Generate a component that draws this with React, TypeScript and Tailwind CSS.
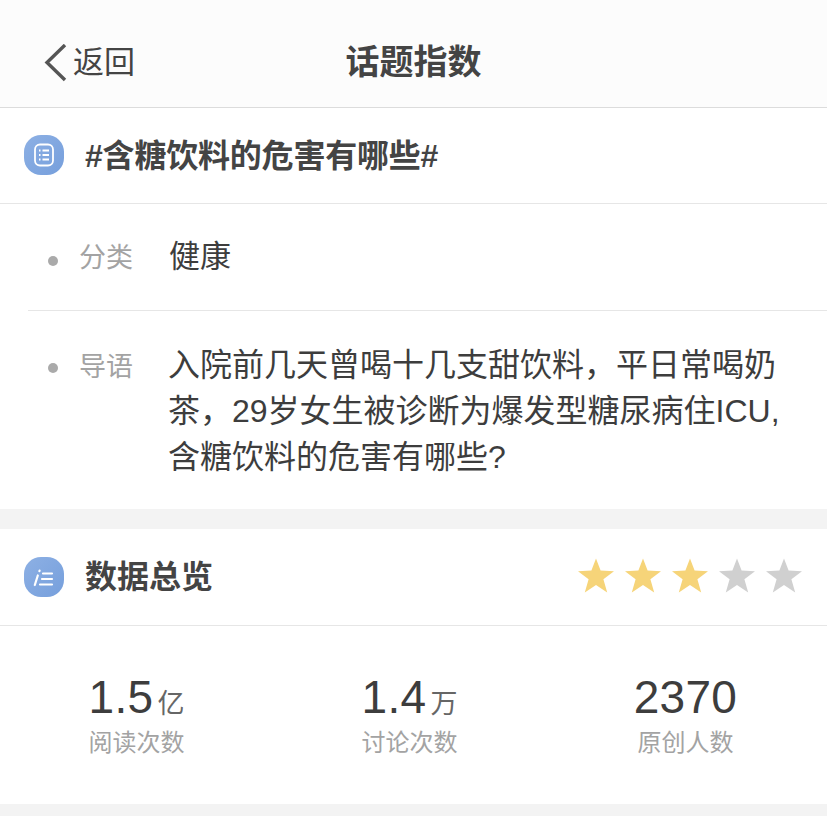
const font = "font-['Liberation_Sans','Noto_Sans_CJK_SC',sans-serif]";

const Star = ({ on }: { on: boolean }) => (
  <svg width="36" height="36" viewBox="0 0 36 36">
    <path
      d="M18 0.5 L22.6 12.6 L36 13.2 L25.4 21.2 L29.2 34.4 L18 27 L6.8 34.4 L10.6 21.2 L0 13.2 L13.4 12.6 Z"
      fill={on ? "#f6d479" : "#d0d0d0"}
    />
  </svg>
);

const IconBox = ({ children }: { children: React.ReactNode }) => (
  <div className="w-10 h-10 rounded-[17px] bg-gradient-to-br from-[#8db0e4] to-[#769fdc] flex items-center justify-center">
    {children}
  </div>
);

const stats = [
  { num: "1.5", unit: "亿", label: "阅读次数" },
  { num: "1.4", unit: "万", label: "讨论次数" },
  { num: "2370", unit: "", label: "原创人数" },
];

const App = () => {
  return (
    <main className={`${font} w-[827px] h-[816px] overflow-hidden bg-white text-[#3d3d3d]`}>
      <header className="h-[108px] bg-[#fcfcfc] border-b border-[#dcdcdc] relative flex items-center justify-center">
        <div className="absolute left-[44px] top-[44px] flex items-center gap-[5px]">
          <svg width="24" height="38" viewBox="0 0 24 38" fill="none">
            <path d="M21 1 L3 18.5 L21 36" stroke="#555555" strokeWidth="3.4" />
          </svg>
          <span className="text-[31px] leading-[38px] text-[#444444]">返回</span>
        </div>
        <h1 className="text-[34px] font-bold leading-none text-[#444444] pt-[16px]">话题指数</h1>
      </header>

      <section className="h-[96px] border-b border-[#e6e6e6] flex items-center pl-6 pb-[2px]">
        <IconBox>
          <svg width="24" height="24" viewBox="0 0 24 24" fill="none" stroke="#ffffff">
            <rect x="3" y="1.5" width="18" height="21" rx="5" strokeWidth="1.8" />
            <path d="M7 7.5h1.5M10.5 7.5h6.5M7 12h1.5M10.5 12h6.5M7 16.5h1.5M10.5 16.5h6.5" strokeWidth="1.8" />
          </svg>
        </IconBox>
        <h2 className="ml-[21px] text-[32px] tracking-[-0.2px] font-bold leading-none text-[#444444] pt-[2px]">#含糖饮料的危害有哪些#</h2>
      </section>

      <section className="h-[107px] pl-7">
        <div className="h-full border-b border-[#e6e6e6] flex items-start pl-5">
          <span className="mt-[52px] block w-[10px] h-[10px] rounded-full bg-[#aaaaaa]" />
          <span className="mt-[41px] ml-[21px] w-[90px] text-[27px] leading-none text-[#a3a3a3]">分类</span>
          <span className="mt-[37px] text-[31px] leading-none">健康</span>
        </div>
      </section>

      <section className="h-[198px] flex items-start pl-12 pt-[31px]">
        <span className="mt-[21px] block w-[10px] h-[10px] rounded-full bg-[#aaaaaa]" />
        <span className="ml-[21px] w-[90px] text-[27px] leading-[46px] text-[#a3a3a3] pt-[2px]">导语</span>
        <p className="text-[32px] leading-[46px] w-[640px] -ml-[1px]">
          入院前几天曾喝十几支甜饮料，平日常喝奶
          <br />
          茶，29岁女生被诊断为爆发型糖尿病住ICU,
          <br />
          含糖饮料的危害有哪些?
        </p>
      </section>

      <div className="h-5 bg-[#f3f3f3]" />

      <section className="h-[97px] border-b border-[#e6e6e6] flex items-center pl-6 pr-[25px]">
        <IconBox>
          <svg width="24" height="24" viewBox="0 0 24 24" fill="none" stroke="#ffffff" strokeWidth="2.2" strokeLinecap="round">
            <path d="M5.8 10.5 L2.8 20M7.6 5.5 L7.4 6.2M11 8.5h9M10 14h10M8 19.5h12" />
          </svg>
        </IconBox>
        <h2 className="ml-[21px] text-[32px] font-bold leading-none text-[#444444]">数据总览</h2>
        <div className="ml-auto flex gap-[11px] -translate-y-px">
          {[true, true, true, false, false].map((on, i) => (
            <Star key={i} on={on} />
          ))}
        </div>
      </section>

      <section className="h-[178px] grid grid-cols-[273px_273px_1fr] pr-[2px] pt-[48px]">
        {stats.map((s) => (
          <div key={s.label} className="flex flex-col items-center">
            <div className="flex items-baseline h-[46px] leading-[46px]">
              <span className="text-[46px] tracking-[0.3px]">{s.num}</span>
              {s.unit && <span className="ml-[4px] text-[27px] text-[#666666]">{s.unit}</span>}
            </div>
            <span className="mt-[6px] text-[24px] leading-[34px] text-[#a3a3a3]">{s.label}</span>
          </div>
        ))}
      </section>

      <div className="h-3 bg-[#f3f3f3]" />
    </main>
  );
};

export default App;
